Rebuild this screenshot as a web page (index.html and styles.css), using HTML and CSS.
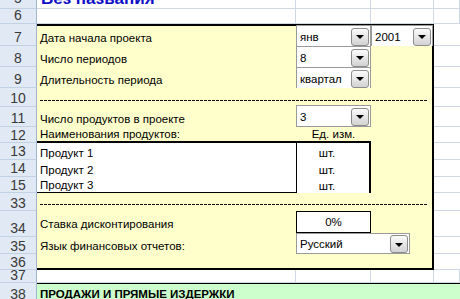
FILE: index.html
```html
<!DOCTYPE html>
<html>
<head>
<meta charset="utf-8">
<link rel="stylesheet" href="styles.css">
</head>
<body>
<div class="sheet">
  <div class="row r5">
    <div class="h">5</div>
    <div class="a g title-cell"><span class="title">Без названия</span></div>
    <div class="b g"></div><div class="c g"></div><div class="d g"></div>
  </div>
  <div class="row r6">
    <div class="h">6</div>
    <div class="a g"></div><div class="b g"></div><div class="c g"></div><div class="d g"></div>
  </div>
  <div class="row r7">
    <div class="h">7</div>
    <div class="a y top t">Дата начала проекта</div>
    <div class="b y top"><div class="dd"><span>янв</span><i class="btn"></i></div></div>
    <div class="c y top"><div class="dd"><span>2001</span><i class="btn"></i></div></div>
    <div class="d gd"></div>
  </div>
  <div class="row r8">
    <div class="h">8</div>
    <div class="a y t">Число периодов</div>
    <div class="b y"><div class="dd"><span>8</span><i class="btn"></i></div></div>
    <div class="c y"></div>
    <div class="d gd"></div>
  </div>
  <div class="row r9">
    <div class="h">9</div>
    <div class="a y t">Длительность периода</div>
    <div class="b y"><div class="dd"><span>квартал</span><i class="btn"></i></div></div>
    <div class="c y"></div>
    <div class="d gd"></div>
  </div>
  <div class="row r10">
    <div class="h">10</div>
    <div class="span y dashcell"><div class="dash"></div></div>
    <div class="d gd"></div>
  </div>
  <div class="row r11">
    <div class="h">11</div>
    <div class="a y t">Число продуктов в проекте</div>
    <div class="b y"><div class="dd up"><span>3</span><i class="btn"></i></div></div>
    <div class="c y"></div>
    <div class="d gd"></div>
  </div>
  <div class="row r12">
    <div class="h">12</div>
    <div class="a y t under">Наименования продуктов:</div>
    <div class="b y t center under">Ед. изм.</div>
    <div class="c y"></div>
    <div class="d gd"></div>
  </div>
  <div class="row r13">
    <div class="h">13</div>
    <div class="a w t prod">Продукт 1</div>
    <div class="b w t unit">шт.</div>
    <div class="c y"></div>
    <div class="d gd"></div>
  </div>
  <div class="row r14">
    <div class="h">14</div>
    <div class="a w t prod">Продукт 2</div>
    <div class="b w t unit">шт.</div>
    <div class="c y"></div>
    <div class="d gd"></div>
  </div>
  <div class="row r15">
    <div class="h">15</div>
    <div class="a w t prod last">Продукт 3</div>
    <div class="b w t unit">шт.</div>
    <div class="c y"></div>
    <div class="d gd"></div>
  </div>
  <div class="row r33">
    <div class="h">33</div>
    <div class="span y dashcell"><div class="dash"></div></div>
    <div class="d gd"></div>
  </div>
  <div class="row r34">
    <div class="h">34</div>
    <div class="a y t rate">Ставка дисконтирования</div>
    <div class="b y"><div class="pct">0%</div></div>
    <div class="c y"></div>
    <div class="d gd"></div>
  </div>
  <div class="row r35">
    <div class="h">35</div>
    <div class="a y t">Язык финансовых отчетов:</div>
    <div class="bc y"><div class="dd lang"><span>Русский</span><i class="btn"></i></div></div>
    <div class="d gd"></div>
  </div>
  <div class="row r36">
    <div class="h">36</div>
    <div class="a y bottom"></div>
    <div class="b y bottom"></div>
    <div class="c y bottom"></div>
    <div class="d gd"></div>
  </div>
  <div class="row r37">
    <div class="h">37</div>
    <div class="a g"></div><div class="b g"></div><div class="c g"></div><div class="d g"></div>
  </div>
  <div class="row r38">
    <div class="h">38</div>
    <div class="green t bold">ПРОДАЖИ И ПРЯМЫЕ ИЗДЕРЖКИ</div>
  </div>
</div>
</body>
</html>
```

FILE: styles.css
```css
html, body {
  margin: 0;
  padding: 0;
  background: #ffffff;
  overflow: hidden;
}
body {
  font-family: "Liberation Sans", Arial, sans-serif;
  font-size: 11.5px;
  color: #000;
}
.sheet {
  width: 460px;
  height: 299px;
  overflow: hidden;
}
.row {
  display: grid;
  grid-template-columns: 37px 259px 75px 63px 1fr;
  grid-template-rows: minmax(0, 1fr);
}
.row > div {
  box-sizing: border-box;
  min-width: 0;
  min-height: 0;
}
.r5 { height: 9px; }
.r6 { height: 15px; }
.r7 { height: 22px; }
.r8 { height: 21px; }
.r9 { height: 21px; }
.r10 { height: 19px; }
.r11 { height: 20px; }
.r12 { height: 16px; }
.r13 { height: 17px; }
.r14 { height: 17px; }
.r15 { height: 16px; }
.r33 { height: 18px; }
.r34 { height: 26px; }
.r35 { height: 17px; }
.r36 { height: 16px; }
.r37 { height: 13px; }
.r38 { height: 20px; }

.h {
  background: #e1e9f5;
  border-right: 1px solid #9eb6ce;
  border-bottom: 1px solid #c3d1e4;
  display: flex;
  align-items: flex-end;
  justify-content: center;
  font-size: 14px;
  line-height: 14px;
  color: #3a3a3a;
  padding-bottom: 1px;
  overflow: hidden;
}
.r5 .h { padding-bottom: 3px; }
.r37 .h, .r36 .h, .r12 .h, .r15 .h, .r33 .h, .r35 .h { padding-bottom: 0; }

.g {
  border-right: 1px solid #d0d7e5;
  border-bottom: 1px solid #d0d7e5;
}
.gd {
  border-bottom: 1px solid #d0d7e5;
}
.y { background: #ffffcc; }
.w { background: #ffffff; }
.row > .c.y, .span, .bc { border-right: 2px solid #000; }
.span { grid-column: 2 / 5; }
.bc { grid-column: 3 / 5; }
.top { border-top: 2px solid #000; }
.bottom { border-bottom: 2px solid #000; }
.under { border-bottom: 2px solid #000; }

.t {
  display: flex;
  align-items: flex-end;
  padding: 0 0 1px 3px;
  white-space: nowrap;
  line-height: 13px;
}
.t.under { padding-bottom: 0; }
.prod { padding-bottom: 0; }
.rate { padding-bottom: 6px; }
.center { justify-content: center; padding-left: 0; }
.unit {
  justify-content: center;
  padding-left: 0;
  padding-right: 12px;
  padding-bottom: 0;
  border-left: 1px solid #000;
  border-right: 2px solid #000;
}
.last { border-bottom: 1px solid #000; }

.title-cell {
  display: flex;
  align-items: flex-end;
  overflow: visible;
}
.title {
  font-size: 17px;
  font-weight: bold;
  color: #0f0fc8;
  line-height: 17px;
  margin-bottom: 1px;
  padding-left: 4px;
  white-space: nowrap;
}

.dd {
  box-sizing: border-box;
  height: calc(100% + 1px);
  background: #fff;
  border: 1px solid #9a9a9a;
  display: flex;
  align-items: center;
  justify-content: space-between;
  padding: 1px 1px 0 3px;
}
.top .dd { margin-top: -1px; height: calc(100% + 2px); }
.c .dd { margin-right: -1px; }
.dd.up { margin-top: -2px; height: 22px; }
.dd.lang {
  width: 114px;
  height: 21px;
  margin-top: -4px;
}
.dd span { line-height: 13px; padding-top: 1px; }
.btn {
  box-sizing: border-box;
  width: 18px;
  height: 18px;
  border: 1px solid #8c8c8c;
  border-radius: 3px;
  background: linear-gradient(#fbfbfb, #d2d2d2);
  display: flex;
  align-items: center;
  justify-content: center;
}
.btn::after {
  content: "";
  width: 0;
  height: 0;
  border-left: 4px solid transparent;
  border-right: 4px solid transparent;
  border-top: 4px solid #000;
  margin-top: 1px;
}

.dashcell {
  display: flex;
  align-items: flex-start;
  padding: 12px 5px 0 3px;
}
.r33 .dashcell { padding-top: 11px; }
.dash {
  width: 100%;
  height: 1px;
  background: repeating-linear-gradient(90deg, #111 0 3px, transparent 3px 4px);
}

.pct {
  box-sizing: border-box;
  height: 22px;
  border: 1px solid #000;
  background: #fff;
  display: flex;
  align-items: flex-end;
  justify-content: center;
  padding-bottom: 3px;
  line-height: 13px;
}

.green {
  grid-column: 2 / 6;
  background: #ccffcc;
  border-top: 1px solid #000;
}
.bold { font-weight: bold; padding-bottom: 0; align-items: flex-start; padding-top: 4px; }
```
